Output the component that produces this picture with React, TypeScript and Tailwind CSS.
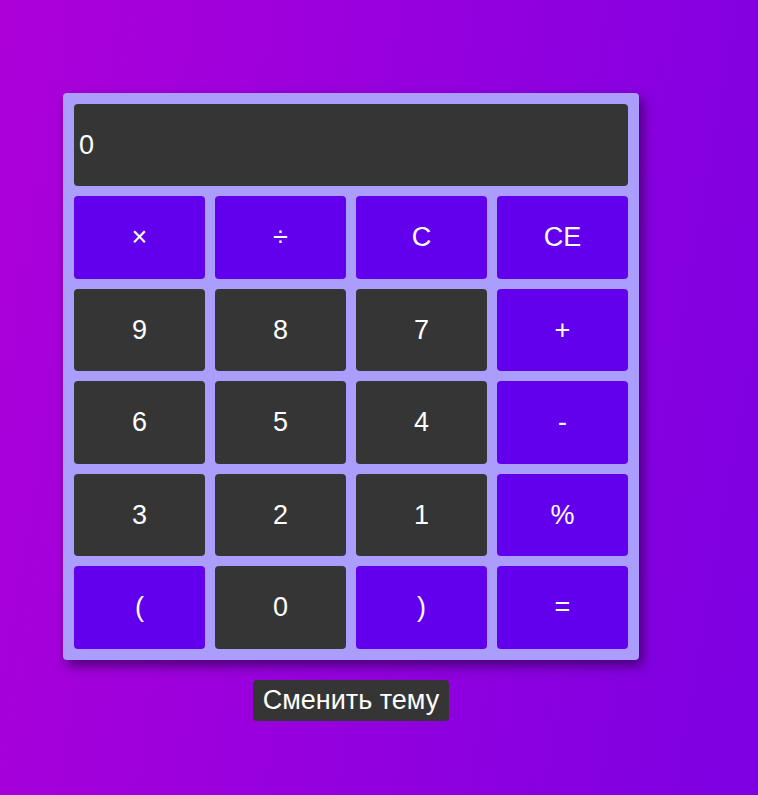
const rows: { label: string; accent: boolean }[][] = [
  [
    { label: '×', accent: true },
    { label: '÷', accent: true },
    { label: 'C', accent: true },
    { label: 'CE', accent: true }
  ],
  [
    { label: '9', accent: false },
    { label: '8', accent: false },
    { label: '7', accent: false },
    { label: '+', accent: true }
  ],
  [
    { label: '6', accent: false },
    { label: '5', accent: false },
    { label: '4', accent: false },
    { label: '-', accent: true }
  ],
  [
    { label: '3', accent: false },
    { label: '2', accent: false },
    { label: '1', accent: false },
    { label: '%', accent: true }
  ],
  [
    { label: '(', accent: true },
    { label: '0', accent: false },
    { label: ')', accent: true },
    { label: '=', accent: true }
  ]
];

export default function App() {
  return (
    <div
      className="min-h-screen w-full bg-[linear-gradient(100deg,#ad00d9,#7d00e3)] pt-[93px] pl-[63px]"
      style={{ fontFamily: '"Liberation Sans", Arial, sans-serif' }}
    >
      <div className="flex w-[576px] flex-col items-center">
        {/* calculator body */}
        <div className="flex w-full flex-col gap-[10px] rounded-[4px] bg-[#aa9dfc] p-[11px] shadow-[4px_6px_12px_rgba(45,0,80,0.7)]">
          <div className="flex h-[82px] items-center rounded-[4px] bg-[#353535] pl-[5px] text-[27px] text-white">
            0
          </div>
          {rows.map((row, i) => (
            <div key={i} className="grid grid-cols-4 gap-[10px]">
              {row.map((b) => (
                <button
                  key={b.label}
                  className={
                    'flex h-[82.5px] items-center justify-center rounded-[4px] text-[27px] text-white ' +
                    (b.accent ? 'bg-[#6200ee]' : 'bg-[#353535]')
                  }
                >
                  {b.label}
                </button>
              ))}
            </div>
          ))}
        </div>
        <button className="mt-[20px] rounded-[4px] bg-[#353535] px-[10px] py-[5px] text-[27px] leading-[31px] text-white">
          Сменить тему
        </button>
      </div>
    </div>
  );
}
